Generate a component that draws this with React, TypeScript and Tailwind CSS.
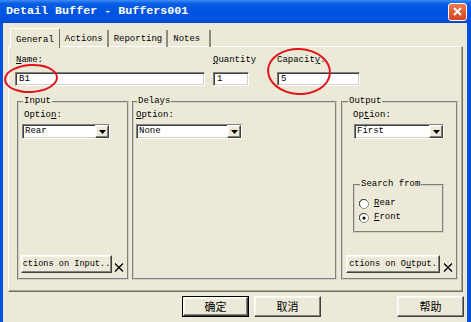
import React from "react";

const FONT = "font-['Liberation_Mono',monospace]";
const CJK = "font-['Noto_Sans_CJK_SC','Noto_Sans',sans-serif]";

const FIELD =
  "bg-white border border-t-[#808080] border-l-[#808080] border-b-white border-r-white shadow-[inset_1px_1px_0_#404040,inset_-1px_-1px_0_#D4D0C8]";
const RAISED =
  "bg-[#ECE9D8] border border-t-white border-l-white border-r-[#404040] border-b-[#404040] shadow-[inset_-1px_-1px_0_#808080,inset_1px_1px_0_#F8F7EE]";
const GROUP = "border-2 border-[#D4D0C8] [border-style:groove] flex flex-col";

function DropDown({ value, className }: { value: string; className: string }) {
  return (
    <div className={`${FIELD} ${className} h-[15px] flex items-stretch`}>
      <span className="flex-1 pl-[2px] leading-[13px]">{value}</span>
      <div className={`${RAISED} w-[14px] flex items-center justify-center`}>
        <svg width="7" height="4" viewBox="0 0 7 4">
          <path d="M0 0H7L3.5 4Z" fill="#000" />
        </svg>
      </div>
    </div>
  );
}

function Cross() {
  return (
    <svg width="10" height="9" viewBox="0 0 10 9" className="mb-[1px]">
      <path d="M1 0.5L9 8.5M9 0.5L1 8.5" stroke="#000" strokeWidth="1.3" />
    </svg>
  );
}

function Radio({ checked }: { checked?: boolean }) {
  return (
    <svg width="10" height="10" viewBox="0 0 10 10">
      <circle cx="5" cy="5" r="4.5" fill="#fff" stroke="#8a8a8a" />
      <path d="M1.5 7.5A4 4 0 0 1 7.5 1.5" fill="none" stroke="#404040" />
      {checked && <circle cx="5" cy="5" r="1.6" fill="#000" />}
    </svg>
  );
}

function Label({ pre, u, post }: { pre: string; u: string; post: string }) {
  return (
    <div className="leading-[11px] whitespace-nowrap">
      {pre}
      <span className="underline">{u}</span>
      {post}
    </div>
  );
}

export default function App() {
  return (
    <div className={`${FONT} relative w-[471px] h-[322px] flex flex-col bg-[#ECE9D8] text-[9px] text-black overflow-hidden`}>
      {/* title bar */}
      <div className="h-[23px] flex items-center pl-[6px] pr-[4px] bg-[linear-gradient(to_bottom,#3D8DF6_0%,#0A5FE4_15%,#0054E3_45%,#0052E0_80%,#0049CF_100%)]">
        <span className="flex-1 text-white font-bold text-[11.7px] leading-none">Detail Buffer - Buffers001</span>
        <div className="w-[19px] h-[18px] rounded-[3px] border border-white bg-[linear-gradient(to_bottom,#EE7A52,#D5431C)] flex items-center justify-center">
          <svg width="9" height="9" viewBox="0 0 9 9">
            <path d="M1 1L8 8M8 1L1 8" stroke="#fff" strokeWidth="2" />
          </svg>
        </div>
      </div>

      {/* body */}
      <div className="flex-1 flex flex-col border-l-[3px] border-r-[4px] border-[#0052E0]">
        {/* tabs */}
        <div className="flex items-end h-[20px] mt-[4px] ml-[7px] relative z-10">
          <div className="h-[20px] px-[5px] pt-[5px] border-t border-l border-white border-r border-r-[#716F64] rounded-t-[2px] bg-[#ECE9D8] -mb-px">
            General
          </div>
          <div className="h-[17px] pl-[5px] pr-[4px] pt-[3px] border-r-2 border-r-[#8E8B7C]">Actions</div>
          <div className="h-[17px] pl-[5px] pr-[4px] pt-[3px] border-r-2 border-r-[#8E8B7C]">Reporting</div>
          <div className="h-[17px] pl-[5px] pr-[9px] pt-[3px] border-r-2 border-r-[#8E8B7C]">Notes</div>
        </div>

        {/* panel */}
        <div className="ml-[5px] w-[455px] h-[246px] -mt-px border border-t-white border-l-white border-r-[#716F64] border-b-[#716F64] shadow-[inset_-1px_-1px_0_#ACA899] pl-[6px] pt-[8px] flex flex-col">
          <div className="flex">
            <div className="w-[190px] flex flex-col">
              <div className="pl-[1px]">
                <Label pre="" u="N" post="ame:" />
              </div>
              <div className={`${FIELD} mt-[6px] h-[14px] pl-[3px] leading-[12px]`}>B1</div>
            </div>
            <div className="w-[36px] ml-[8px] flex flex-col">
              <Label pre="" u="Q" post="uantity" />
              <div className={`${FIELD} mt-[6px] h-[14px] pl-[3px] leading-[12px]`}>1</div>
            </div>
            <div className="w-[83px] ml-[28px] flex flex-col">
              <Label pre="Capacit" u="y" post=":" />
              <div className={`${FIELD} mt-[6px] h-[14px] pl-[3px] leading-[12px]`}>5</div>
            </div>
          </div>

          <div className="flex mt-[10px] ml-[2px]">
            {/* Input */}
            <fieldset className={`${GROUP} w-[112px] h-[184px] pl-[3px] pb-[5px]`}>
              <legend className="ml-[1px] px-[1px] leading-[11px]">Input</legend>
              <div className="mt-[3px] ml-[2px]">
                <Label pre="Optio" u="n" post=":" />
              </div>
              <DropDown value="Rear" className="mt-[3px] w-[88px]" />
              <div className="mt-auto flex items-end">
                <div className={`${RAISED} w-[91px] h-[18px] -ml-px flex items-center justify-center whitespace-nowrap text-[8.6px]`}>
                  ctions on Input..
                </div>
                <div className="ml-[2px]">
                  <Cross />
                </div>
              </div>
            </fieldset>

            {/* Delays */}
            <fieldset className={`${GROUP} w-[205px] h-[184px] ml-[3px] pl-[2px]`}>
              <legend className="ml-[1px] px-[1px] leading-[11px]">Delays</legend>
              <div className="mt-[3px]">
                <Label pre="" u="O" post="ption:" />
              </div>
              <DropDown value="None" className="mt-[3px] w-[106px]" />
            </fieldset>

            {/* Output */}
            <fieldset className={`${GROUP} w-[117px] h-[184px] ml-[4px] pl-[10px] pb-[5px]`}>
              <legend className="-ml-[5px] px-[1px] leading-[11px]">Output</legend>
              <div className="mt-[3px]">
                <Label pre="Op" u="t" post="ion:" />
              </div>
              <DropDown value="First" className="mt-[3px] ml-[1px] w-[90px]" />
              <fieldset className={`${GROUP} w-[91px] h-[54px] mt-[40px] pl-[4px]`}>
                <legend className="ml-[1px] px-[1px] leading-[11px]">Search from</legend>
                <div className="mt-[8px] flex items-center h-[11px]">
                  <Radio />
                  <span className="ml-[5px]">
                    <span className="underline">R</span>ear
                  </span>
                </div>
                <div className="mt-[3px] flex items-center h-[11px]">
                  <Radio checked />
                  <span className="ml-[5px]">
                    <span className="underline">F</span>ront
                  </span>
                </div>
              </fieldset>
              <div className="mt-auto flex items-end">
                <div className={`${RAISED} w-[94px] h-[18px] -ml-[7px] flex items-center justify-center whitespace-nowrap text-[8.6px]`}>
                  <span>
                    ctions on O<span className="underline">u</span>tput.
                  </span>
                </div>
                <div className="ml-[3px]">
                  <Cross />
                </div>
              </div>
            </fieldset>
          </div>
        </div>

        {/* dialog buttons */}
        <div className={`${CJK} flex mt-[4px] ml-[179px] text-[11px]`}>
          <div className="w-[67px] h-[21px] border border-black">
            <div className={`${RAISED} h-full flex items-center justify-center`}>确定</div>
          </div>
          <div className={`${RAISED} w-[67px] h-[21px] ml-[5px] flex items-center justify-center`}>取消</div>
          <div className={`${RAISED} w-[67px] h-[21px] ml-[76px] flex items-center justify-center`}>帮助</div>
        </div>
      </div>

      {/* hand-drawn red marks */}
      <div className="absolute left-[4px] top-[64px] w-[54px] h-[29px] rounded-[50%] border-2 border-[#E0141A] -rotate-3" />
      <div className="absolute left-[267px] top-[48px] w-[64px] h-[47px] rounded-[50%] border-2 border-[#E0141A] rotate-3" />
    </div>
  );
}
